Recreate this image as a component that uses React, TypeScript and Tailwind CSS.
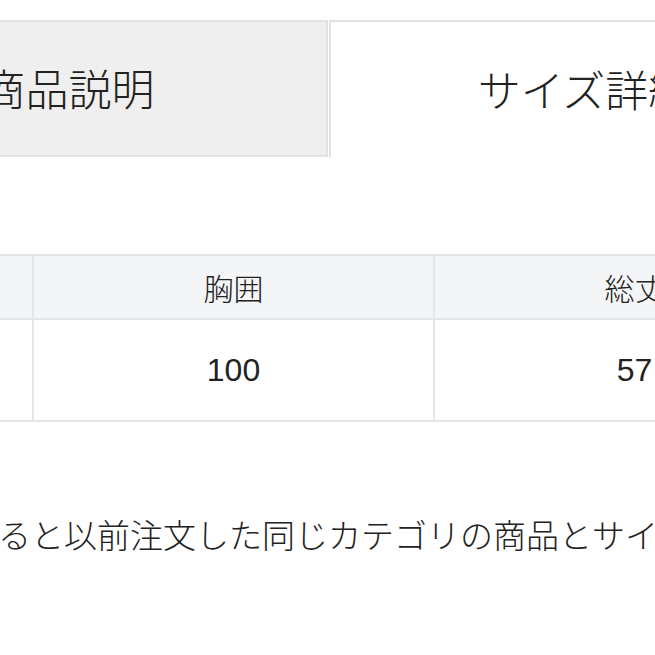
import React from "react";

export default function App() {
  return (
    <div className="w-[655px] h-[655px] overflow-hidden bg-white text-[#222] font-['Noto_Sans_CJK_JP','Noto_Sans',sans-serif] font-light">
      <div className="pt-[20px] flex ml-[-181px] w-[1200px]">
        <div className="w-[509px] h-[137px] shrink-0 bg-[#efefef] border-t-2 border-r-2 border-b-2 border-[#e2e2e2] flex items-center justify-center pr-[8px] pb-[2px] text-[43px] leading-none">
          商品説明
        </div>
        <div className="w-[509px] h-[137px] shrink-0 ml-[1px] bg-white border-t-2 border-l-2 border-[#e2e2e2] flex items-center justify-center pb-[2px] text-[43px] leading-none">
          サイズ詳細
        </div>
      </div>

      <div className="mt-[97px] ml-[-367px] w-[1201px] grid grid-cols-[399px_399px_399px] grid-rows-[62px_100px] gap-[2px] py-[2px] bg-[#e4e6e9] text-[30px] leading-none">
        <div className="bg-[#f3f5f7] flex items-center justify-center">サイズ</div>
        <div className="bg-[#f3f5f7] flex items-center justify-center">胸囲</div>
        <div className="bg-[#f3f5f7] flex items-center justify-center">総丈</div>
        <div className="bg-white flex items-center justify-center font-['Liberation_Sans',sans-serif] font-normal text-[32px]">M</div>
        <div className="bg-white flex items-center justify-center font-['Liberation_Sans',sans-serif] font-normal text-[32px]">100</div>
        <div className="bg-white flex items-center justify-center font-['Liberation_Sans',sans-serif] font-normal text-[32px]">57</div>
      </div>

      <div className="mt-[89px] ml-[-2px] whitespace-nowrap text-[33px] leading-[46px]">
        ると以前注文した同じカテゴリの商品とサイズ比較ができます
      </div>
    </div>
  );
}
